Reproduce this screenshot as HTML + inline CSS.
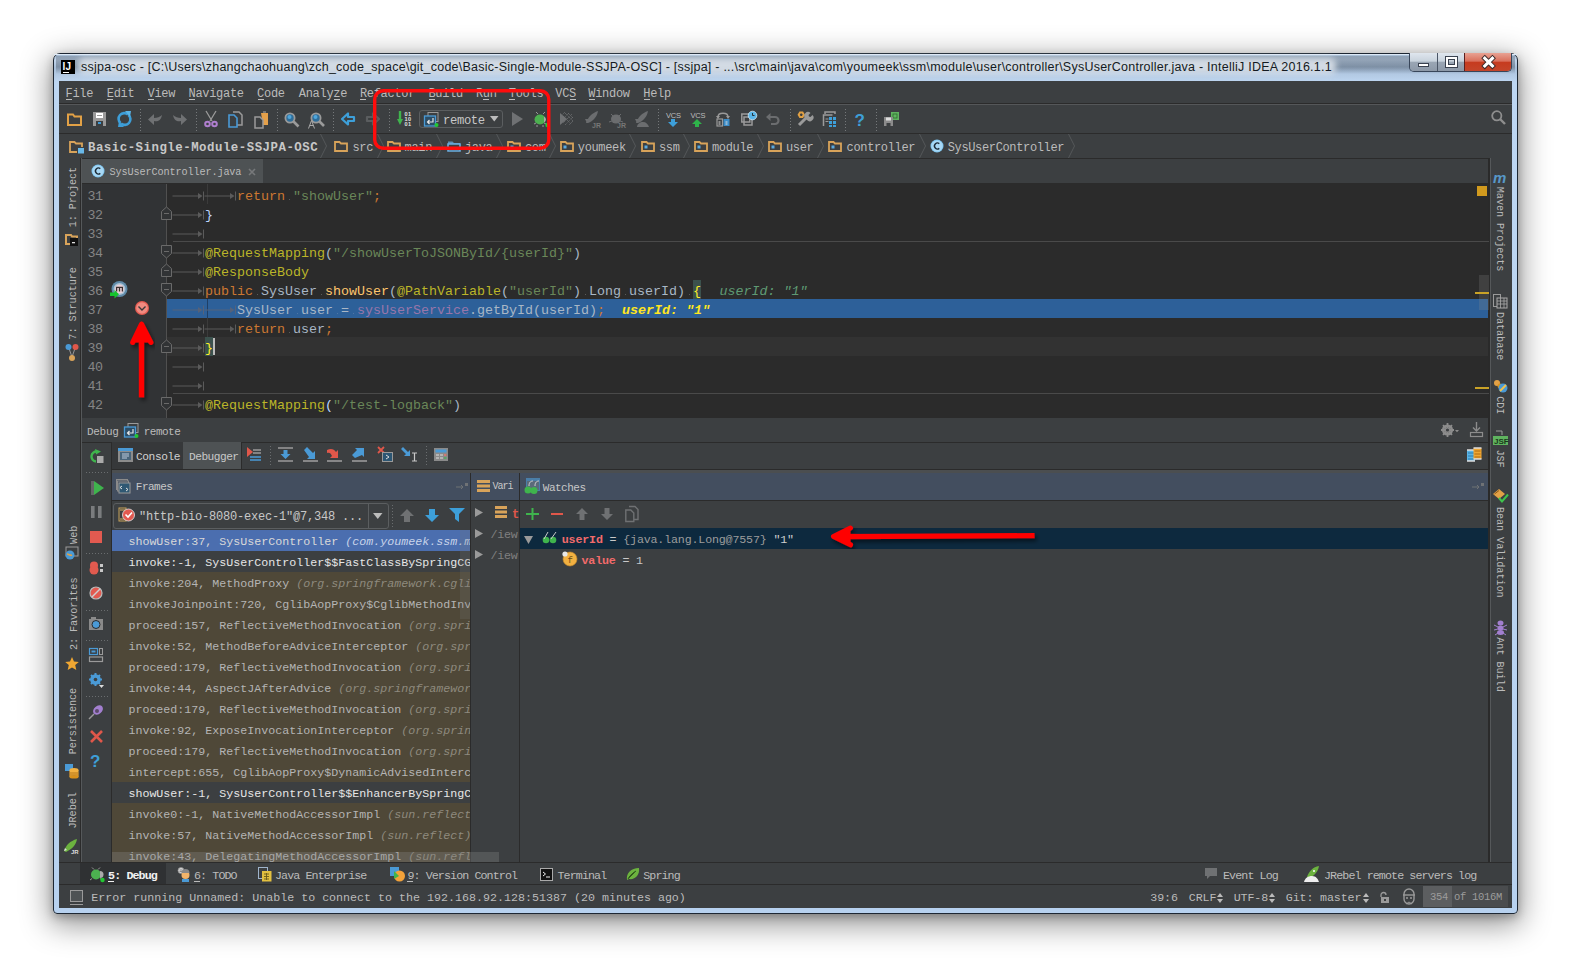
<!DOCTYPE html>
<html><head><meta charset="utf-8"><style>
*{margin:0;padding:0;box-sizing:border-box}
html,body{width:1571px;height:967px;overflow:hidden;background:#fff}
body{position:relative;font-family:"Liberation Mono",monospace;color:#bbb}
.a{position:absolute}
.t{position:absolute;white-space:pre}
svg.a{overflow:visible}
</style></head><body>
<div class="a" style="left:53px;top:53px;width:1465px;height:861px;border-radius:7px 7px 4px 4px;border:1px solid #1d2733;background:linear-gradient(180deg,#9fb6cf 0,#c3d6ec 6px,#a9c0da 14px,#b8cfe9 24px,#bdd6f2 28px,#b7d1ef 100%);box-shadow:0 8px 30px 3px rgba(0,0,0,.42),0 3px 8px rgba(0,0,0,.25)"></div>
<div class="a" style="left:54px;top:54px;width:1463px;height:1px;background:#dde9f6;"></div>
<div class="a" style="left:56px;top:56px;width:1459px;height:18px;background:linear-gradient(180deg,rgba(120,135,152,.55) 0,rgba(95,110,128,.6) 60%,rgba(120,140,165,.0) 100%)"></div>
<div class="a" style="left:78px;top:58px;width:1258px;height:16px;background:rgba(226,232,238,.85);filter:blur(3px);border-radius:6px"></div>
<div class="a" style="left:61px;top:60px;width:14px;height:14px;background:#000;"></div>
<div class="t" style="left:62.5px;top:62.03px;font-size:10px;line-height:10px;color:#fff;letter-spacing:0.2px;font-weight:bold;font-family:'Liberation Sans',sans-serif;">IJ</div>
<div class="a" style="left:63px;top:72px;width:6px;height:1px;background:#fff;"></div>
<div class="t" id="title" style="left:81px;top:61.42px;font-size:12.5px;line-height:12.5px;color:#141a22;font-family:'Liberation Sans',sans-serif;letter-spacing:0.24px">ssjpa-osc - [C:\Users\zhangchaohuang\zch_code_space\git_code\Basic-Single-Module-SSJPA-OSC] - [ssjpa] - ...\src\main\java\com\youmeek\ssm\module\user\controller\SysUserController.java - IntelliJ IDEA 2016.1.1</div>
<div class="a" style="left:1409px;top:53px;width:103px;height:19px;border:1px solid #38465a;border-top:none;border-radius:0 0 5px 5px;overflow:hidden"><div class="a" style="left:0;top:0;width:28px;height:18px;background:linear-gradient(180deg,#dfe6ee 0,#c9d3dd 45%,#9aa6b4 52%,#8d99a8 100%);border-right:1px solid #4a5566"></div><div class="a" style="left:28px;top:0;width:27px;height:18px;background:linear-gradient(180deg,#dfe6ee 0,#c9d3dd 45%,#9aa6b4 52%,#8d99a8 100%);border-right:1px solid #5a2020"></div><div class="a" style="left:55px;top:0;width:47px;height:18px;background:linear-gradient(180deg,#e8a293 0,#d9705c 45%,#c63b1f 52%,#c4452a 100%)"></div></div>
<div class="a" style="left:1418px;top:63px;width:11px;height:4px;background:#fff;border:1px solid #3a4250"></div>
<div class="a" style="left:1445.5px;top:57px;width:11px;height:9.5px;background:transparent;border:2.5px solid #fff;box-shadow:0 0 0 1px #3a4250, inset 0 0 0 1px #3a4250"></div>
<svg class="a" style="left:1482px;top:56px;" width="13" height="12" viewBox="0 0 13 12"><path d="M2.8 2.3l7.6 7.6M10.4 2.3l-7.6 7.6" stroke="#3a2a2a" stroke-width="5" stroke-linecap="square"/><path d="M2.8 2.3l7.6 7.6M10.4 2.3l-7.6 7.6" stroke="#ffffff" stroke-width="3.1" stroke-linecap="square"/></svg>
<div class="a" style="left:59px;top:81px;width:1453px;height:827px;background:#3c3f41;"></div>
<div class="a" style="left:59px;top:81px;width:1453px;height:22px;background:#3c3f41;"></div>
<div class="a" style="left:59px;top:103px;width:1453px;height:1px;background:#2b2b2b;"></div>
<div class="a" style="left:59px;top:104px;width:1453px;height:1px;background:#555759;"></div>
<div class="t" style="left:65.5px;top:87.81px;font-size:12px;line-height:12px;color:#bbbbbb;letter-spacing:-0.2999999999999998px;">File</div>
<div class="a" style="left:66.0px;top:99px;width:6px;height:1px;background:#bbbbbb;"></div>
<div class="t" style="left:106.8px;top:87.81px;font-size:12px;line-height:12px;color:#bbbbbb;letter-spacing:-0.2999999999999998px;">Edit</div>
<div class="a" style="left:107.3px;top:99px;width:6px;height:1px;background:#bbbbbb;"></div>
<div class="t" style="left:147.5px;top:87.81px;font-size:12px;line-height:12px;color:#bbbbbb;letter-spacing:-0.2999999999999998px;">View</div>
<div class="a" style="left:148.0px;top:99px;width:6px;height:1px;background:#bbbbbb;"></div>
<div class="t" style="left:188.5px;top:87.81px;font-size:12px;line-height:12px;color:#bbbbbb;letter-spacing:-0.2999999999999998px;">Navigate</div>
<div class="a" style="left:189.0px;top:99px;width:6px;height:1px;background:#bbbbbb;"></div>
<div class="t" style="left:257.1px;top:87.81px;font-size:12px;line-height:12px;color:#bbbbbb;letter-spacing:-0.2999999999999998px;">Code</div>
<div class="a" style="left:257.6px;top:99px;width:6px;height:1px;background:#bbbbbb;"></div>
<div class="t" style="left:298.8px;top:87.81px;font-size:12px;line-height:12px;color:#bbbbbb;letter-spacing:-0.2999999999999998px;">Analyze</div>
<div class="a" style="left:333.8px;top:99px;width:6px;height:1px;background:#bbbbbb;"></div>
<div class="t" style="left:359.9px;top:87.81px;font-size:12px;line-height:12px;color:#bbbbbb;letter-spacing:-0.2999999999999998px;">Refactor</div>
<div class="a" style="left:360.4px;top:99px;width:6px;height:1px;background:#bbbbbb;"></div>
<div class="t" style="left:428.4px;top:87.81px;font-size:12px;line-height:12px;color:#bbbbbb;letter-spacing:-0.2999999999999998px;">Build</div>
<div class="a" style="left:428.9px;top:99px;width:6px;height:1px;background:#bbbbbb;"></div>
<div class="t" style="left:475.9px;top:87.81px;font-size:12px;line-height:12px;color:#bbbbbb;letter-spacing:-0.2999999999999998px;">Run</div>
<div class="a" style="left:483.29999999999995px;top:99px;width:6px;height:1px;background:#bbbbbb;"></div>
<div class="t" style="left:508.8px;top:87.81px;font-size:12px;line-height:12px;color:#bbbbbb;letter-spacing:-0.2999999999999998px;">Tools</div>
<div class="a" style="left:509.3px;top:99px;width:6px;height:1px;background:#bbbbbb;"></div>
<div class="t" style="left:555.3px;top:87.81px;font-size:12px;line-height:12px;color:#bbbbbb;letter-spacing:-0.2999999999999998px;">VCS</div>
<div class="a" style="left:569.5999999999999px;top:99px;width:6px;height:1px;background:#bbbbbb;"></div>
<div class="t" style="left:588.3px;top:87.81px;font-size:12px;line-height:12px;color:#bbbbbb;letter-spacing:-0.2999999999999998px;">Window</div>
<div class="a" style="left:588.8px;top:99px;width:6px;height:1px;background:#bbbbbb;"></div>
<div class="t" style="left:643.3px;top:87.81px;font-size:12px;line-height:12px;color:#bbbbbb;letter-spacing:-0.2999999999999998px;">Help</div>
<div class="a" style="left:643.8px;top:99px;width:6px;height:1px;background:#bbbbbb;"></div>
<div class="a" style="left:59px;top:133px;width:1453px;height:1px;background:#2b2b2b;"></div>
<div class="a" style="left:140px;top:109px;width:1px;height:22px;background:repeating-linear-gradient(180deg,#75787a 0 1px,transparent 1px 3px)"></div>
<div class="a" style="left:196px;top:109px;width:1px;height:22px;background:repeating-linear-gradient(180deg,#75787a 0 1px,transparent 1px 3px)"></div>
<div class="a" style="left:277px;top:109px;width:1px;height:22px;background:repeating-linear-gradient(180deg,#75787a 0 1px,transparent 1px 3px)"></div>
<div class="a" style="left:333px;top:109px;width:1px;height:22px;background:repeating-linear-gradient(180deg,#75787a 0 1px,transparent 1px 3px)"></div>
<div class="a" style="left:389px;top:109px;width:1px;height:22px;background:repeating-linear-gradient(180deg,#75787a 0 1px,transparent 1px 3px)"></div>
<div class="a" style="left:658px;top:109px;width:1px;height:22px;background:repeating-linear-gradient(180deg,#75787a 0 1px,transparent 1px 3px)"></div>
<div class="a" style="left:790px;top:109px;width:1px;height:22px;background:repeating-linear-gradient(180deg,#75787a 0 1px,transparent 1px 3px)"></div>
<div class="a" style="left:845px;top:109px;width:1px;height:22px;background:repeating-linear-gradient(180deg,#75787a 0 1px,transparent 1px 3px)"></div>
<div class="a" style="left:876px;top:109px;width:1px;height:22px;background:repeating-linear-gradient(180deg,#75787a 0 1px,transparent 1px 3px)"></div>
<svg class="a" style="left:67px;top:112px;" width="15" height="14" viewBox="0 0 15 14"><path d="M1 2.5h5l1.5 2H14v8.5H1z" fill="none" stroke="#e2a146" stroke-width="2"/></svg>
<svg class="a" style="left:93px;top:112px;" width="13" height="14" viewBox="0 0 13 14"><path d="M0 0h13v14H0z" fill="#9a9a9a"/><rect x="3" y="1" width="7" height="5" fill="#fff"/><rect x="4" y="3" width="5" height="1" fill="#9a9a9a"/><rect x="3" y="9" width="7" height="5" fill="#3c3f41"/><rect x="5" y="10" width="3" height="2" fill="#3e9ad6"/></svg>
<svg class="a" style="left:117px;top:111px;" width="15" height="16" viewBox="0 0 15 16"><path d="M11 3.5A5.5 5.5 0 0 0 3.5 12" fill="none" stroke="#3d9ed8" stroke-width="2.6"/><path d="M4 12.5A5.5 5.5 0 0 0 11.5 4" fill="none" stroke="#3d9ed8" stroke-width="2.6"/><path d="M8 0l6 0-1 6z" fill="#5ab4e6"/><path d="M7 16l-6 0 1-6z" fill="#3d9ed8"/></svg>
<svg class="a" style="left:148px;top:112px;" width="15" height="14" viewBox="0 0 15 14"><path d="M14 3c-1 6-5 7-8 6v4L0 7.5 6 2v4c3 0 6-1 8-3z" fill="#6f7173"/></svg>
<svg class="a" style="left:172px;top:112px;" width="15" height="14" viewBox="0 0 15 14"><path d="M1 3c1 6 5 7 8 6v4l6-5.5L9 2v4C6 6 3 5 1 3z" fill="#6f7173"/></svg>
<svg class="a" style="left:204px;top:111px;" width="14" height="17" viewBox="0 0 14 17"><path d="M2 0l6 10M12 0L6 10" stroke="#9a9a9a" stroke-width="1.3"/><circle cx="3.5" cy="13" r="2.3" fill="none" stroke="#b07fcf" stroke-width="2"/><circle cx="10.5" cy="13" r="2.3" fill="none" stroke="#b07fcf" stroke-width="2"/></svg>
<svg class="a" style="left:228px;top:111px;" width="15" height="17" viewBox="0 0 15 17"><path d="M5 1h6l3 3v10H9" fill="none" stroke="#9a9a9a" stroke-width="1.5"/><path d="M1 4h5l3 3v9H1z" fill="none" stroke="#4a9ad6" stroke-width="1.6"/></svg>
<svg class="a" style="left:254px;top:111px;" width="15" height="17" viewBox="0 0 15 17"><path d="M7 2h7v12H9" fill="#e4a04a"/><path d="M9 1h3" stroke="#aaa"/><path d="M1 6h5l3 3v8H1z" fill="#3c3f41" stroke="#9a9a9a" stroke-width="1.5"/></svg>
<svg class="a" style="left:284px;top:112px;" width="16" height="16" viewBox="0 0 16 16"><circle cx="6" cy="6" r="4.6" fill="#2f6e9a" stroke="#9a9a9a" stroke-width="1.8"/><circle cx="5.5" cy="5" r="2" fill="#4ea6dc"/><path d="M9.5 9.5l5 5" stroke="#9a9a9a" stroke-width="2.6"/></svg>
<svg class="a" style="left:308px;top:112px;" width="17" height="17" viewBox="0 0 17 17"><circle cx="8" cy="6" r="4.6" fill="#2f6e9a" stroke="#9a9a9a" stroke-width="1.8"/><circle cx="7.5" cy="5" r="2" fill="#4ea6dc"/><path d="M11.5 9.5l4.5 4.5" stroke="#9a9a9a" stroke-width="2.6"/><path d="M0.5 16.5L3.5 8.5 6.5 16.5M1.8 13.5h3.4" fill="none" stroke="#aaa" stroke-width="1"/></svg>
<svg class="a" style="left:341px;top:112px;" width="14" height="14" viewBox="0 0 14 14"><path d="M1 7L7 1.5V5h6v4H7v3.5z" fill="none" stroke="#3d9fd9" stroke-width="2.2" stroke-linejoin="round"/></svg>
<svg class="a" style="left:366px;top:112px;" width="14" height="14" viewBox="0 0 14 14"><path d="M13 7L7 1.5V5H1v4h6v3.5z" fill="none" stroke="#5a5d5f" stroke-width="2.2" stroke-linejoin="round"/></svg>
<svg class="a" style="left:397px;top:111px;" width="16" height="16" viewBox="0 0 16 16"><path d="M3 0v10" stroke="#3fb44d" stroke-width="2.4"/><path d="M0 8l3 6 3-6z" fill="#3fb44d"/></svg>
<div class="t" style="left:404.5px;top:112.06px;font-size:5.6px;line-height:5.6px;color:#e0e0e0;letter-spacing:0.3px;font-weight:bold;font-family:'Liberation Sans',sans-serif;">01</div>
<div class="t" style="left:404.5px;top:116.86px;font-size:5.6px;line-height:5.6px;color:#e0e0e0;letter-spacing:0.3px;font-weight:bold;font-family:'Liberation Sans',sans-serif;">10</div>
<div class="t" style="left:404.5px;top:121.66px;font-size:5.6px;line-height:5.6px;color:#e0e0e0;letter-spacing:0.3px;font-weight:bold;font-family:'Liberation Sans',sans-serif;">01</div>
<div class="a" style="left:419px;top:110px;width:84px;height:18px;border:1px solid #5b5e60;border-radius:3px;"></div>
<svg class="a" style="left:424px;top:112px;" width="15" height="15" viewBox="0 0 15 15"><rect x="4" y="0.5" width="10" height="9" fill="none" stroke="#9a9a9a" stroke-width="1"/><rect x="0.5" y="4" width="11" height="10" fill="#2c4d66" stroke="#4a9ad6" stroke-width="1.3"/><path d="M9 6v4H3.5M5.5 8l-2 2 2 2" fill="none" stroke="#e6e6e6" stroke-width="1.2"/><circle cx="12.5" cy="13" r="2" fill="#22c832"/></svg>
<div class="t" style="left:443px;top:114.65px;font-size:12.2px;line-height:12.2px;color:#c8c8c8;letter-spacing:-0.35px;">remote</div>
<svg class="a" style="left:490px;top:116px;" width="9" height="6" viewBox="0 0 9 6"><path d="M0 0h8.5L4.25 5.5z" fill="#bcbcbc"/></svg>
<svg class="a" style="left:512px;top:112px;" width="12" height="14" viewBox="0 0 12 14"><path d="M0 0l11 7-11 7z" fill="#6f7173"/></svg>
<svg class="a" style="left:534px;top:111px;" width="16" height="17" viewBox="0 0 16 17"><ellipse cx="6" cy="8.5" rx="5.5" ry="5" fill="#4cb050"/><path d="M10 5.5a4 3.5 0 0 1 0 6z" fill="#aaa"/><path d="M2 1l2 2M11 1l-2 2M0 13l2-1M12 13l-2-1M3 14l0 2M9 14l0 2" stroke="#999" stroke-width="1"/><circle cx="13.5" cy="14" r="2.2" fill="#22c832"/></svg>
<svg class="a" style="left:560px;top:112px;" width="14" height="14" viewBox="0 0 14 14"><path d="M0 1l7 6-7 6z" fill="#6f7173"/><path d="M5 1l8 8M3 4l8 8M8 1l5 5M5 0l-4 4M9 1l-8 8M12 2l-9 9M13 5l-8 8M13 9l-4 4" stroke="#6f7173" stroke-width="1" stroke-dasharray="1 1"/></svg>
<svg class="a" style="left:584px;top:111px;" width="17" height="17" viewBox="0 0 17 17"><path d="M2 12c2-6 6-10 12-12-1 6-5 10-10 12z" fill="#6b6d6f"/><path d="M1 8l4 0-2 4z" fill="#6b6d6f"/><text x="8" y="17" font-size="7" font-family="Liberation Sans" font-weight="bold" fill="#777">JR</text></svg>
<svg class="a" style="left:609px;top:111px;" width="17" height="17" viewBox="0 0 17 17"><ellipse cx="7" cy="8" rx="5" ry="4.5" fill="#6b6d6f"/><path d="M2 3l2 2M12 3l-2 2M0 11l3-1M14 11l-3-1" stroke="#6b6d6f"/><text x="8" y="17" font-size="7" font-family="Liberation Sans" font-weight="bold" fill="#777">JR</text></svg>
<svg class="a" style="left:634px;top:111px;" width="17" height="17" viewBox="0 0 17 17"><path d="M2 12c2-6 6-10 12-12-1 6-5 10-10 12z" fill="#6b6d6f"/><path d="M1 8l4 0-2 4z" fill="#6b6d6f"/><path d="M3 16c0-3 3-5 6-5s5 2 6 5z" fill="#6b6d6f"/></svg>
<div class="t" style="left:666px;top:112.15px;font-size:7.5px;line-height:7.5px;color:#bdbdbd;letter-spacing:-0.2px;font-family:'Liberation Sans',sans-serif;">VCS</div>
<svg class="a" style="left:668px;top:119px;" width="10" height="8" viewBox="0 0 10 8"><path d="M3 0h4v3h3L5 8 0 3h3z" fill="#3d9fd9"/></svg>
<div class="t" style="left:690.5px;top:112.15px;font-size:7.5px;line-height:7.5px;color:#bdbdbd;letter-spacing:-0.2px;font-family:'Liberation Sans',sans-serif;">VCS</div>
<svg class="a" style="left:692px;top:119px;" width="10" height="8" viewBox="0 0 10 8"><path d="M3 8h4V5h3L5 0 0 5h3z" fill="#2eb34a"/></svg>
<svg class="a" style="left:716px;top:111px;" width="15" height="16" viewBox="0 0 15 16"><path d="M2 6c0-5 10-5 10 0" fill="none" stroke="#9a9a9a" stroke-width="1.4"/><path d="M0 5l2 3 2-3zM10 5l2 3 2-3z" fill="#9a9a9a"/><rect x="1" y="8" width="5.5" height="7" fill="none" stroke="#9a9a9a" stroke-width="1.2"/><rect x="7.5" y="8" width="6" height="7" fill="#3b8cc8"/><path d="M2.5 11h2M2.5 13h2M9.5 11h2M9.5 13h2" stroke="#ddd"/></svg>
<svg class="a" style="left:741px;top:111px;" width="16" height="15" viewBox="0 0 16 15"><rect x="0.8" y="3" width="8" height="8" fill="none" stroke="#9a9a9a" stroke-width="1.5"/><rect x="3" y="6" width="8" height="8" fill="none" stroke="#9a9a9a" stroke-width="1.5"/><circle cx="11.5" cy="4.5" r="4.3" fill="#5ab6ea" stroke="#cfe9f7" stroke-width=".8"/><path d="M11.5 2v2.5h2" stroke="#222" fill="none" stroke-width="0.9"/></svg>
<svg class="a" style="left:766px;top:112px;" width="14" height="14" viewBox="0 0 14 14"><path d="M4 5h5a3.5 3.5 0 0 1 0 7H5" fill="none" stroke="#6b6d6f" stroke-width="2.2"/><path d="M0 5l4.5-4v8z" fill="#6b6d6f"/></svg>
<svg class="a" style="left:797px;top:111px;" width="16" height="16" viewBox="0 0 16 16"><path d="M3 1.5l2.5 0 1.3 2.2-1.3 2.2H3L1.7 3.7z" fill="none" stroke="#e0a044" stroke-width="2"/><path d="M2 14l7-7" stroke="#9a9a9a" stroke-width="3"/><path d="M8.5 7.5a3.5 3.5 0 0 1 5-5.5l-2 2 .5 1.5 1.5.5 2-2a3.5 3.5 0 0 1-5.5 5z" fill="#9a9a9a"/></svg>
<svg class="a" style="left:822px;top:111px;" width="15" height="16" viewBox="0 0 15 16"><path d="M3 3V1h10v2M1.5 15V4h9" fill="none" stroke="#9a9a9a" stroke-width="1.5"/><path d="M3.5 8h3M3.5 10.5h3" stroke="#9a9a9a"/><rect x="7" y="6" width="3" height="3" fill="#3d9fd9"/><rect x="11" y="6" width="3" height="3" fill="#3d9fd9"/><rect x="7" y="10" width="3" height="3" fill="#3d9fd9"/><rect x="11" y="10" width="3" height="3" fill="#3d9fd9"/><rect x="7" y="14" width="3" height="2" fill="#3d9fd9"/><rect x="11" y="14" width="3" height="2" fill="#3d9fd9"/></svg>
<div class="t" style="left:854.5px;top:111.61px;font-size:17px;line-height:17px;color:#3e9fd8;font-weight:bold;font-family:'Liberation Sans',sans-serif;">?</div>
<svg class="a" style="left:884px;top:111px;" width="16" height="16" viewBox="0 0 16 16"><rect x="7" y="1" width="8" height="8" fill="#5fb35f"/><rect x="9" y="3" width="4" height="4" fill="none" stroke="#2d6b2d" stroke-width="0.8"/><path d="M0 6h9v9H0z" fill="#8c8c8c"/><rect x="2" y="6.5" width="5" height="3" fill="#ddd"/><rect x="2.5" y="12" width="4" height="3" fill="#3c3f41"/></svg>
<svg class="a" style="left:1491px;top:110px;" width="15" height="15" viewBox="0 0 15 15"><circle cx="5.8" cy="5.8" r="4.6" fill="none" stroke="#8e8e8e" stroke-width="1.8"/><path d="M9 9l5 5" stroke="#8e8e8e" stroke-width="2.4"/></svg>
<div class="a" style="left:59px;top:158px;width:1453px;height:1px;background:#2b2b2b;"></div>
<svg class="a" style="left:69px;top:140px;" width="16" height="14" viewBox="0 0 16 14"><path d="M1 2h4.5l1.5 1.5H13V12H1z" fill="none" stroke="#d8a35a" stroke-width="1.8"/><rect x="8.5" y="7.5" width="7" height="6.5" fill="#69b8e8" stroke="#3c3f41" stroke-width="1"/></svg>
<div class="t" style="left:88px;top:141.50px;font-size:12.4px;line-height:12.4px;color:#c8c8c8;letter-spacing:0.5px;font-weight:bold;">Basic-Single-Module-SSJPA-OSC</div>
<svg class="a" style="left:320px;top:134px;" width="8" height="24" viewBox="0 0 8 24"><path d="M0.5 0L6.5 12 0.5 24" fill="none" stroke="#545759" stroke-width="1"/></svg>
<svg class="a" style="left:334px;top:140px;" width="14" height="12" viewBox="0 0 14 12"><path d="M1 2h4.5l1.5 1.5H13V11H1z" fill="none" stroke="#d8a35a" stroke-width="1.8"/></svg>
<div class="t" style="left:352.5px;top:142.11px;font-size:12px;line-height:12px;color:#bbbbbb;letter-spacing:-0.35000000000000053px;">src</div>
<svg class="a" style="left:377px;top:134px;" width="8" height="24" viewBox="0 0 8 24"><path d="M0.5 0L6.5 12 0.5 24" fill="none" stroke="#545759" stroke-width="1"/></svg>
<svg class="a" style="left:387px;top:140px;" width="14" height="12" viewBox="0 0 14 12"><path d="M1 2h4.5l1.5 1.5H13V11H1z" fill="none" stroke="#d8a35a" stroke-width="1.8"/></svg>
<div class="t" style="left:404.6px;top:142.11px;font-size:12px;line-height:12px;color:#bbbbbb;letter-spacing:-0.35000000000000053px;">main</div>
<svg class="a" style="left:436px;top:134px;" width="8" height="24" viewBox="0 0 8 24"><path d="M0.5 0L6.5 12 0.5 24" fill="none" stroke="#545759" stroke-width="1"/></svg>
<svg class="a" style="left:447px;top:140px;" width="14" height="12" viewBox="0 0 14 12"><path d="M1 1.5h4.5l1.5 1.5H13V11H1z" fill="#5a8fb5"/><path d="M1 4h12v7H1z" fill="#3c3f41" stroke="#6aaee0" stroke-width="1.6"/></svg>
<div class="t" style="left:465px;top:142.11px;font-size:12px;line-height:12px;color:#bbbbbb;letter-spacing:-0.35000000000000053px;">java</div>
<svg class="a" style="left:496px;top:134px;" width="8" height="24" viewBox="0 0 8 24"><path d="M0.5 0L6.5 12 0.5 24" fill="none" stroke="#545759" stroke-width="1"/></svg>
<svg class="a" style="left:507px;top:140px;" width="14" height="12" viewBox="0 0 14 12"><path d="M1 2h4.5l1.5 1.5H13V11H1z" fill="none" stroke="#d8a35a" stroke-width="1.8"/><rect x="3.5" y="5.5" width="3" height="3" fill="#5aa9e0"/></svg>
<div class="t" style="left:525px;top:142.11px;font-size:12px;line-height:12px;color:#bbbbbb;letter-spacing:-0.35000000000000053px;">com</div>
<svg class="a" style="left:549px;top:134px;" width="8" height="24" viewBox="0 0 8 24"><path d="M0.5 0L6.5 12 0.5 24" fill="none" stroke="#545759" stroke-width="1"/></svg>
<svg class="a" style="left:560px;top:140px;" width="14" height="12" viewBox="0 0 14 12"><path d="M1 2h4.5l1.5 1.5H13V11H1z" fill="none" stroke="#d8a35a" stroke-width="1.8"/><rect x="3.5" y="5.5" width="3" height="3" fill="#5aa9e0"/></svg>
<div class="t" style="left:577.8px;top:142.11px;font-size:12px;line-height:12px;color:#bbbbbb;letter-spacing:-0.35000000000000053px;">youmeek</div>
<svg class="a" style="left:629px;top:134px;" width="8" height="24" viewBox="0 0 8 24"><path d="M0.5 0L6.5 12 0.5 24" fill="none" stroke="#545759" stroke-width="1"/></svg>
<svg class="a" style="left:641px;top:140px;" width="14" height="12" viewBox="0 0 14 12"><path d="M1 2h4.5l1.5 1.5H13V11H1z" fill="none" stroke="#d8a35a" stroke-width="1.8"/><rect x="3.5" y="5.5" width="3" height="3" fill="#5aa9e0"/></svg>
<div class="t" style="left:659px;top:142.11px;font-size:12px;line-height:12px;color:#bbbbbb;letter-spacing:-0.35000000000000053px;">ssm</div>
<svg class="a" style="left:683px;top:134px;" width="8" height="24" viewBox="0 0 8 24"><path d="M0.5 0L6.5 12 0.5 24" fill="none" stroke="#545759" stroke-width="1"/></svg>
<svg class="a" style="left:694px;top:140px;" width="14" height="12" viewBox="0 0 14 12"><path d="M1 2h4.5l1.5 1.5H13V11H1z" fill="none" stroke="#d8a35a" stroke-width="1.8"/><rect x="3.5" y="5.5" width="3" height="3" fill="#5aa9e0"/></svg>
<div class="t" style="left:712px;top:142.11px;font-size:12px;line-height:12px;color:#bbbbbb;letter-spacing:-0.35000000000000053px;">module</div>
<svg class="a" style="left:757px;top:134px;" width="8" height="24" viewBox="0 0 8 24"><path d="M0.5 0L6.5 12 0.5 24" fill="none" stroke="#545759" stroke-width="1"/></svg>
<svg class="a" style="left:768px;top:140px;" width="14" height="12" viewBox="0 0 14 12"><path d="M1 2h4.5l1.5 1.5H13V11H1z" fill="none" stroke="#d8a35a" stroke-width="1.8"/><rect x="3.5" y="5.5" width="3" height="3" fill="#5aa9e0"/></svg>
<div class="t" style="left:786px;top:142.11px;font-size:12px;line-height:12px;color:#bbbbbb;letter-spacing:-0.35000000000000053px;">user</div>
<svg class="a" style="left:817px;top:134px;" width="8" height="24" viewBox="0 0 8 24"><path d="M0.5 0L6.5 12 0.5 24" fill="none" stroke="#545759" stroke-width="1"/></svg>
<svg class="a" style="left:828px;top:140px;" width="14" height="12" viewBox="0 0 14 12"><path d="M1 2h4.5l1.5 1.5H13V11H1z" fill="none" stroke="#d8a35a" stroke-width="1.8"/><rect x="3.5" y="5.5" width="3" height="3" fill="#5aa9e0"/></svg>
<div class="t" style="left:846.6px;top:142.11px;font-size:12px;line-height:12px;color:#bbbbbb;letter-spacing:-0.35000000000000053px;">controller</div>
<svg class="a" style="left:919px;top:134px;" width="8" height="24" viewBox="0 0 8 24"><path d="M0.5 0L6.5 12 0.5 24" fill="none" stroke="#545759" stroke-width="1"/></svg>
<svg class="a" style="left:930px;top:139px;" width="14" height="14" viewBox="0 0 14 14"><circle cx="7" cy="7" r="6.5" fill="#7fc6f0"/><circle cx="7" cy="7" r="5.6" fill="#a8d8f5"/><path d="M9.3 4.6A3 3 0 1 0 9.3 9.4" fill="none" stroke="#1b2a36" stroke-width="1.4"/></svg>
<div class="t" style="left:947.7px;top:142.11px;font-size:12px;line-height:12px;color:#bbbbbb;letter-spacing:-0.35000000000000053px;">SysUserController</div>
<svg class="a" style="left:1068px;top:134px;" width="8" height="24" viewBox="0 0 8 24"><path d="M0.5 0L6.5 12 0.5 24" fill="none" stroke="#545759" stroke-width="1"/></svg>
<div class="a" style="left:59px;top:158px;width:22px;height:704px;background:#3c3f41;"></div>
<div class="a" style="left:80px;top:158px;width:1px;height:704px;background:#2b2b2b;"></div>
<div class="a" style="left:81px;top:158px;width:1px;height:704px;background:#55585a;"></div>
<div class="a" style="left:1490px;top:158px;width:22px;height:704px;background:#3c3f41;"></div>
<div class="a" style="left:1488px;top:158px;width:2px;height:704px;background:#2a2a2a;"></div>
<div class="a" style="left:1490px;top:158px;width:1px;height:704px;background:#55585a;"></div>
<div class="a" style="left:82px;top:159px;width:1406px;height:24px;background:#3c3f41;"></div>
<div class="a" style="left:82px;top:159px;width:181px;height:24px;background:#4e5254;"></div>
<svg class="a" style="left:91px;top:164px;" width="14" height="14" viewBox="0 0 14 14"><circle cx="7" cy="7" r="6.5" fill="#7fc6f0"/><circle cx="7" cy="7" r="5.6" fill="#a8d8f5"/><path d="M9.3 4.6A3 3 0 1 0 9.3 9.4" fill="none" stroke="#1b2a36" stroke-width="1.4"/></svg>
<div class="t" style="left:109.5px;top:168.19px;font-size:10.2px;line-height:10.2px;color:#bbbbbb;letter-spacing:-0.1200000000000001px;">SysUserController.java</div>
<svg class="a" style="left:248px;top:168px;" width="8" height="8" viewBox="0 0 8 8"><path d="M1 1l6 6M7 1L1 7" stroke="#77797b" stroke-width="1.6"/></svg>
<div class="a" style="left:82px;top:183px;width:1406px;height:1px;background:#2b2b2b;"></div>
<div class="a" style="left:82px;top:184px;width:1406px;height:234px;background:#2b2b2b;"></div>
<div class="a" style="left:82px;top:184px;width:84px;height:234px;background:#313335;"></div>
<div class="a" style="left:167px;top:299px;width:1321px;height:19px;background:#2d6099;"></div>
<div class="a" style="left:167px;top:337px;width:1321px;height:19px;background:#323232;"></div>
<div class="a" style="left:173px;top:241px;width:1316px;height:1px;background:#4a4a4a;"></div>
<div class="a" style="left:173px;top:393px;width:1316px;height:1px;background:#4a4a4a;"></div>
<div class="a" style="left:166px;top:184px;width:1px;height:235px;background:#505050;"></div>
<div class="a" style="left:207px;top:184px;width:1px;height:20px;background:#3b3b3b;"></div>
<div class="a" style="left:207px;top:299px;width:1px;height:19px;background:#1f3f66;"></div>
<div class="a" style="left:207px;top:318px;width:1px;height:19px;background:#3b3b3b;"></div>
<svg class="a" style="left:172.0px;top:190.5px;" width="33" height="10" viewBox="0 0 33 10"><path d="M0.5 5H28" stroke="#5b5b5b" stroke-width="1"/><path d="M26 2l4.5 3-4.5 3z" fill="#5b5b5b"/><path d="M31.5 0.5v9" stroke="#5b5b5b" stroke-width="1"/></svg>
<svg class="a" style="left:172.0px;top:209.5px;" width="33" height="10" viewBox="0 0 33 10"><path d="M0.5 5H28" stroke="#5b5b5b" stroke-width="1"/><path d="M26 2l4.5 3-4.5 3z" fill="#5b5b5b"/><path d="M31.5 0.5v9" stroke="#5b5b5b" stroke-width="1"/></svg>
<svg class="a" style="left:172.0px;top:228.5px;" width="33" height="10" viewBox="0 0 33 10"><path d="M0.5 5H28" stroke="#5b5b5b" stroke-width="1"/><path d="M26 2l4.5 3-4.5 3z" fill="#5b5b5b"/><path d="M31.5 0.5v9" stroke="#5b5b5b" stroke-width="1"/></svg>
<svg class="a" style="left:172.0px;top:247.5px;" width="33" height="10" viewBox="0 0 33 10"><path d="M0.5 5H28" stroke="#5b5b5b" stroke-width="1"/><path d="M26 2l4.5 3-4.5 3z" fill="#5b5b5b"/><path d="M31.5 0.5v9" stroke="#5b5b5b" stroke-width="1"/></svg>
<svg class="a" style="left:172.0px;top:266.5px;" width="33" height="10" viewBox="0 0 33 10"><path d="M0.5 5H28" stroke="#5b5b5b" stroke-width="1"/><path d="M26 2l4.5 3-4.5 3z" fill="#5b5b5b"/><path d="M31.5 0.5v9" stroke="#5b5b5b" stroke-width="1"/></svg>
<svg class="a" style="left:172.0px;top:285.5px;" width="33" height="10" viewBox="0 0 33 10"><path d="M0.5 5H28" stroke="#5b5b5b" stroke-width="1"/><path d="M26 2l4.5 3-4.5 3z" fill="#5b5b5b"/><path d="M31.5 0.5v9" stroke="#5b5b5b" stroke-width="1"/></svg>
<svg class="a" style="left:172.0px;top:304.5px;" width="33" height="10" viewBox="0 0 33 10"><path d="M0.5 5H28" stroke="#55627a" stroke-width="1"/><path d="M26 2l4.5 3-4.5 3z" fill="#55627a"/><path d="M31.5 0.5v9" stroke="#55627a" stroke-width="1"/></svg>
<svg class="a" style="left:172.0px;top:323.5px;" width="33" height="10" viewBox="0 0 33 10"><path d="M0.5 5H28" stroke="#5b5b5b" stroke-width="1"/><path d="M26 2l4.5 3-4.5 3z" fill="#5b5b5b"/><path d="M31.5 0.5v9" stroke="#5b5b5b" stroke-width="1"/></svg>
<svg class="a" style="left:172.0px;top:342.5px;" width="33" height="10" viewBox="0 0 33 10"><path d="M0.5 5H28" stroke="#5b5b5b" stroke-width="1"/><path d="M26 2l4.5 3-4.5 3z" fill="#5b5b5b"/><path d="M31.5 0.5v9" stroke="#5b5b5b" stroke-width="1"/></svg>
<svg class="a" style="left:172.0px;top:361.5px;" width="33" height="10" viewBox="0 0 33 10"><path d="M0.5 5H28" stroke="#5b5b5b" stroke-width="1"/><path d="M26 2l4.5 3-4.5 3z" fill="#5b5b5b"/><path d="M31.5 0.5v9" stroke="#5b5b5b" stroke-width="1"/></svg>
<svg class="a" style="left:172.0px;top:380.5px;" width="33" height="10" viewBox="0 0 33 10"><path d="M0.5 5H28" stroke="#5b5b5b" stroke-width="1"/><path d="M26 2l4.5 3-4.5 3z" fill="#5b5b5b"/><path d="M31.5 0.5v9" stroke="#5b5b5b" stroke-width="1"/></svg>
<svg class="a" style="left:172.0px;top:399.5px;" width="33" height="10" viewBox="0 0 33 10"><path d="M0.5 5H28" stroke="#5b5b5b" stroke-width="1"/><path d="M26 2l4.5 3-4.5 3z" fill="#5b5b5b"/><path d="M31.5 0.5v9" stroke="#5b5b5b" stroke-width="1"/></svg>
<svg class="a" style="left:204.0px;top:190.5px;" width="33" height="10" viewBox="0 0 33 10"><path d="M0.5 5H28" stroke="#5b5b5b" stroke-width="1"/><path d="M26 2l4.5 3-4.5 3z" fill="#5b5b5b"/><path d="M31.5 0.5v9" stroke="#5b5b5b" stroke-width="1"/></svg>
<svg class="a" style="left:204.0px;top:304.5px;" width="33" height="10" viewBox="0 0 33 10"><path d="M0.5 5H28" stroke="#55627a" stroke-width="1"/><path d="M26 2l4.5 3-4.5 3z" fill="#55627a"/><path d="M31.5 0.5v9" stroke="#55627a" stroke-width="1"/></svg>
<svg class="a" style="left:204.0px;top:323.5px;" width="33" height="10" viewBox="0 0 33 10"><path d="M0.5 5H28" stroke="#5b5b5b" stroke-width="1"/><path d="M26 2l4.5 3-4.5 3z" fill="#5b5b5b"/><path d="M31.5 0.5v9" stroke="#5b5b5b" stroke-width="1"/></svg>
<div class="t" style="left:237.0px;top:189.79px;font-size:13.33px;line-height:13.33px;color:#cc7832;">return</div>
<div class="t" style="left:293.0px;top:189.79px;font-size:13.33px;line-height:13.33px;color:#6a8759;">&quot;showUser&quot;</div>
<div class="t" style="left:373.0px;top:189.79px;font-size:13.33px;line-height:13.33px;color:#cc7832;">;</div>
<div class="t" style="left:205.0px;top:208.79px;font-size:13.33px;line-height:13.33px;color:#bed6ff;">}</div>
<div class="t" style="left:205.0px;top:246.79px;font-size:13.33px;line-height:13.33px;color:#bbb529;">@RequestMapping</div>
<div class="t" style="left:325.0px;top:246.79px;font-size:13.33px;line-height:13.33px;color:#a9b7c6;">(</div>
<div class="t" style="left:333.0px;top:246.79px;font-size:13.33px;line-height:13.33px;color:#6a8759;">&quot;/showUserToJSONById/{userId}&quot;</div>
<div class="t" style="left:573.0px;top:246.79px;font-size:13.33px;line-height:13.33px;color:#a9b7c6;">)</div>
<div class="t" style="left:205.0px;top:265.79px;font-size:13.33px;line-height:13.33px;color:#bbb529;">@ResponseBody</div>
<div class="t" style="left:205.0px;top:284.79px;font-size:13.33px;line-height:13.33px;color:#cc7832;">public</div>
<div class="t" style="left:261.0px;top:284.79px;font-size:13.33px;line-height:13.33px;color:#a9b7c6;">SysUser</div>
<div class="t" style="left:325.0px;top:284.79px;font-size:13.33px;line-height:13.33px;color:#ffc66d;">showUser</div>
<div class="t" style="left:389.0px;top:284.79px;font-size:13.33px;line-height:13.33px;color:#a9b7c6;">(</div>
<div class="t" style="left:397.0px;top:284.79px;font-size:13.33px;line-height:13.33px;color:#bbb529;">@PathVariable</div>
<div class="t" style="left:501.0px;top:284.79px;font-size:13.33px;line-height:13.33px;color:#a9b7c6;">(</div>
<div class="t" style="left:509.0px;top:284.79px;font-size:13.33px;line-height:13.33px;color:#6a8759;">&quot;userId&quot;</div>
<div class="t" style="left:573.0px;top:284.79px;font-size:13.33px;line-height:13.33px;color:#a9b7c6;">) Long userId) </div>
<div class="a" style="left:693.0px;top:280px;width:8px;height:19px;background:#3b514d;"></div>
<div class="t" style="left:693.0px;top:284.79px;font-size:13.33px;line-height:13.33px;color:#ffef28;">{</div>
<div class="t" style="left:719.5px;top:284.79px;font-size:13.33px;line-height:13.33px;color:#5f9a73;font-style:italic;">userId: &quot;1&quot;</div>
<div class="t" style="left:237.0px;top:303.79px;font-size:13.33px;line-height:13.33px;color:#a9b7c6;">SysUser user = </div>
<div class="t" style="left:357.0px;top:303.79px;font-size:13.33px;line-height:13.33px;color:#9876aa;">sysUserService</div>
<div class="t" style="left:469.0px;top:303.79px;font-size:13.33px;line-height:13.33px;color:#a9b7c6;">.getById(userId)</div>
<div class="t" style="left:597.0px;top:303.79px;font-size:13.33px;line-height:13.33px;color:#cc7832;">;</div>
<div class="t" style="left:622px;top:303.79px;font-size:13.33px;line-height:13.33px;color:#ffe620;font-weight:bold;font-style:italic;">userId: &quot;1&quot;</div>
<div class="t" style="left:237.0px;top:322.79px;font-size:13.33px;line-height:13.33px;color:#cc7832;">return</div>
<div class="t" style="left:293.0px;top:322.79px;font-size:13.33px;line-height:13.33px;color:#a9b7c6;">user</div>
<div class="t" style="left:325.0px;top:322.79px;font-size:13.33px;line-height:13.33px;color:#cc7832;">;</div>
<div class="a" style="left:205.0px;top:337px;width:8px;height:19px;background:#3b514d;"></div>
<div class="t" style="left:205.0px;top:341.79px;font-size:13.33px;line-height:13.33px;color:#ffef28;">}</div>
<div class="a" style="left:213px;top:338px;width:2px;height:17px;background:#bbbbbb;"></div>
<div class="t" style="left:205.0px;top:398.79px;font-size:13.33px;line-height:13.33px;color:#bbb529;">@RequestMapping</div>
<div class="t" style="left:325.0px;top:398.79px;font-size:13.33px;line-height:13.33px;color:#bed6ff;">(</div>
<div class="t" style="left:333.0px;top:398.79px;font-size:13.33px;line-height:13.33px;color:#6a8759;">&quot;/test-logback&quot;</div>
<div class="t" style="left:453.0px;top:398.79px;font-size:13.33px;line-height:13.33px;color:#a9b7c6;">)</div>
<div class="a" style="left:288.5px;top:199px;width:1px;height:1px;background:#5a5a5a;"></div>
<div class="a" style="left:256.5px;top:294px;width:1px;height:1px;background:#5a5a5a;"></div>
<div class="a" style="left:320.5px;top:294px;width:1px;height:1px;background:#5a5a5a;"></div>
<div class="a" style="left:584.5px;top:294px;width:1px;height:1px;background:#5a5a5a;"></div>
<div class="a" style="left:624.5px;top:294px;width:1px;height:1px;background:#5a5a5a;"></div>
<div class="a" style="left:688.5px;top:294px;width:1px;height:1px;background:#5a5a5a;"></div>
<div class="a" style="left:296.5px;top:313px;width:1px;height:1px;background:#4f75a5;"></div>
<div class="a" style="left:336.5px;top:313px;width:1px;height:1px;background:#4f75a5;"></div>
<div class="a" style="left:352.5px;top:313px;width:1px;height:1px;background:#4f75a5;"></div>
<div class="a" style="left:288.5px;top:332px;width:1px;height:1px;background:#5a5a5a;"></div>
<div class="t" style="left:87.5px;top:189.79px;font-size:13.33px;line-height:13.33px;color:#858585;letter-spacing:-0.5999999999999996px;">31</div>
<div class="t" style="left:87.5px;top:208.79px;font-size:13.33px;line-height:13.33px;color:#858585;letter-spacing:-0.5999999999999996px;">32</div>
<div class="t" style="left:87.5px;top:227.79px;font-size:13.33px;line-height:13.33px;color:#858585;letter-spacing:-0.5999999999999996px;">33</div>
<div class="t" style="left:87.5px;top:246.79px;font-size:13.33px;line-height:13.33px;color:#858585;letter-spacing:-0.5999999999999996px;">34</div>
<div class="t" style="left:87.5px;top:265.79px;font-size:13.33px;line-height:13.33px;color:#858585;letter-spacing:-0.5999999999999996px;">35</div>
<div class="t" style="left:87.5px;top:284.79px;font-size:13.33px;line-height:13.33px;color:#858585;letter-spacing:-0.5999999999999996px;">36</div>
<div class="t" style="left:87.5px;top:303.79px;font-size:13.33px;line-height:13.33px;color:#858585;letter-spacing:-0.5999999999999996px;">37</div>
<div class="t" style="left:87.5px;top:322.79px;font-size:13.33px;line-height:13.33px;color:#858585;letter-spacing:-0.5999999999999996px;">38</div>
<div class="t" style="left:87.5px;top:341.79px;font-size:13.33px;line-height:13.33px;color:#858585;letter-spacing:-0.5999999999999996px;">39</div>
<div class="t" style="left:87.5px;top:360.79px;font-size:13.33px;line-height:13.33px;color:#858585;letter-spacing:-0.5999999999999996px;">40</div>
<div class="t" style="left:87.5px;top:379.79px;font-size:13.33px;line-height:13.33px;color:#858585;letter-spacing:-0.5999999999999996px;">41</div>
<div class="t" style="left:87.5px;top:398.79px;font-size:13.33px;line-height:13.33px;color:#858585;letter-spacing:-0.5999999999999996px;">42</div>
<svg class="a" style="left:161px;top:207px;" width="11" height="13" viewBox="0 0 11 13"><path d="M0.5 12.5h10v-8l-5-4.5-5 4.5z" fill="#313335" stroke="#6a6a6a" stroke-width="1"/><path d="M3 6.5h5" stroke="#6a6a6a"/></svg>
<svg class="a" style="left:161px;top:245px;" width="11" height="13" viewBox="0 0 11 13"><path d="M0.5 0.5h10v8l-5 4.5-5-4.5z" fill="#313335" stroke="#6a6a6a" stroke-width="1"/><path d="M3 6.5h5" stroke="#6a6a6a"/></svg>
<svg class="a" style="left:161px;top:264px;" width="11" height="13" viewBox="0 0 11 13"><path d="M0.5 12.5h10v-8l-5-4.5-5 4.5z" fill="#313335" stroke="#6a6a6a" stroke-width="1"/><path d="M3 6.5h5" stroke="#6a6a6a"/></svg>
<svg class="a" style="left:161px;top:283px;" width="11" height="13" viewBox="0 0 11 13"><path d="M0.5 0.5h10v8l-5 4.5-5-4.5z" fill="#313335" stroke="#6a6a6a" stroke-width="1"/><path d="M3 6.5h5" stroke="#6a6a6a"/></svg>
<svg class="a" style="left:161px;top:340px;" width="11" height="13" viewBox="0 0 11 13"><path d="M0.5 12.5h10v-8l-5-4.5-5 4.5z" fill="#313335" stroke="#6a6a6a" stroke-width="1"/><path d="M3 6.5h5" stroke="#6a6a6a"/></svg>
<svg class="a" style="left:161px;top:397px;" width="11" height="13" viewBox="0 0 11 13"><path d="M0.5 0.5h10v8l-5 4.5-5-4.5z" fill="#313335" stroke="#6a6a6a" stroke-width="1"/><path d="M3 6.5h5" stroke="#6a6a6a"/></svg>
<svg class="a" style="left:109px;top:280px;" width="20" height="20" viewBox="0 0 20 20"><circle cx="10.5" cy="9" r="8" fill="#5f8aa8"/><circle cx="10.5" cy="9" r="6" fill="#a9c2d4"/><circle cx="10.5" cy="9" r="4.6" fill="#ead0d6"/><path d="M7.6 11.5V7.3h5.8v4.2M10.5 7.3v4.2" fill="none" stroke="#3a3030" stroke-width="1.3"/><path d="M1 12.5h4.5V10l4.5 4.3-4.5 4.3V16H1z" fill="#15c42d"/></svg>
<svg class="a" style="left:134px;top:300px;" width="16" height="16" viewBox="0 0 16 16"><circle cx="8" cy="8" r="7" fill="#e25a50"/><circle cx="8" cy="8" r="5.8" fill="#f08a80"/><path d="M4.5 6.5l3.5 3.5 3.5-3.5" fill="none" stroke="#3a3a3a" stroke-width="1.4"/></svg>
<div class="a" style="left:1479px;top:275px;width:10px;height:35px;background:rgba(140,140,140,.22);"></div>
<div class="a" style="left:1477px;top:186px;width:10px;height:10px;background:#d19a1e;"></div>
<div class="a" style="left:1475px;top:292px;width:14px;height:2px;background:#c9a227;"></div>
<div class="a" style="left:1475px;top:387px;width:14px;height:2px;background:#c9a227;"></div>
<div class="a" style="left:82px;top:418px;width:1406px;height:24px;background:#3c3f41;"></div>
<div class="t" style="left:87px;top:427.07px;font-size:11px;line-height:11px;color:#bbbbbb;letter-spacing:-0.2999999999999998px;">Debug</div>
<svg class="a" style="left:124px;top:423px;" width="15" height="15" viewBox="0 0 15 15"><rect x="4" y="0.5" width="10" height="9" fill="none" stroke="#9a9a9a" stroke-width="1"/><rect x="0.5" y="4" width="11" height="10" fill="#2c4d66" stroke="#4a9ad6" stroke-width="1.3"/><path d="M9 6v4H3.5M5.5 8l-2 2 2 2" fill="none" stroke="#e6e6e6" stroke-width="1.2"/><circle cx="12.5" cy="13" r="2" fill="#22c832"/></svg>
<div class="t" style="left:143.7px;top:427.07px;font-size:11px;line-height:11px;color:#bbbbbb;letter-spacing:-0.5px;">remote</div>
<svg class="a" style="left:1441px;top:423px;" width="18" height="14" viewBox="0 0 18 14"><circle cx="6.5" cy="7" r="4.3" fill="none" stroke="#8c8c8c" stroke-width="2.6"/><path d="M6.5 0v14M0 7h13M2 2.2l9 9.6M11 2.2l-9 9.6" stroke="#8c8c8c" stroke-width="1.8"/><circle cx="6.5" cy="7" r="1.6" fill="#3c3f41"/><path d="M14 7h4l-2 2.2z" fill="#8c8c8c"/></svg>
<svg class="a" style="left:1470px;top:422px;" width="13" height="15" viewBox="0 0 13 15"><path d="M6.5 0v8" stroke="#8c8c8c" stroke-width="1.4"/><path d="M3 5.5l3.5 3.5 3.5-3.5" fill="none" stroke="#8c8c8c" stroke-width="1.4"/><rect x="0.5" y="10.5" width="12" height="4" fill="none" stroke="#8c8c8c" stroke-width="1.2"/></svg>
<div class="a" style="left:82px;top:442px;width:1406px;height:1px;background:#2b2b2b;"></div>
<div class="a" style="left:111px;top:442px;width:1px;height:420px;background:#2b2b2b;"></div>
<div class="a" style="left:112px;top:442px;width:71px;height:28px;background:#36383a;"></div>
<div class="a" style="left:183px;top:442px;width:58px;height:28px;background:#4e5254;"></div>
<div class="a" style="left:241px;top:442px;width:1px;height:28px;background:#2b2b2b;"></div>
<div class="a" style="left:112px;top:469px;width:1376px;height:1px;background:#2b2b2b;"></div>
<div class="a" style="left:112px;top:470px;width:1376px;height:3px;background:#4b4e50;"></div>
<svg class="a" style="left:118px;top:448px;" width="15" height="14" viewBox="0 0 15 14"><rect x="0" y="0" width="15" height="14" fill="#8c8c8c"/><rect x="0" y="0" width="15" height="3" fill="#4a9ad6"/><rect x="2" y="4" width="11" height="8" fill="#4a657a"/><path d="M4 6h7M4 8h7M4 10h5" stroke="#bcd" stroke-width="1"/></svg>
<div class="t" style="left:136px;top:451.92px;font-size:11.2px;line-height:11.2px;color:#d0d0d0;letter-spacing:-0.41999999999999993px;">Console</div>
<div class="t" style="left:189px;top:451.92px;font-size:11.2px;line-height:11.2px;color:#c8c8c8;letter-spacing:-0.5199999999999996px;">Debugger</div>
<svg class="a" style="left:89px;top:449px;" width="15" height="14" viewBox="0 0 15 14"><path d="M8 2.5A5 5 0 1 0 7 12.5" fill="none" stroke="#3fb44d" stroke-width="2.4"/><path d="M6 0l6 2.5-5 3z" fill="#3fb44d"/><rect x="8" y="7" width="6.5" height="7" fill="#aaaaaa"/></svg>
<div class="a" style="left:86px;top:472px;width:1px;height:1px;background:repeating-linear-gradient(180deg,#6a6d6f 0 1px,transparent 1px 3px)"></div>
<div class="a" style="left:86px;top:472px;width:22px;height:1px;background:repeating-linear-gradient(90deg,#6a6d6f 0 1px,transparent 1px 3px)"></div>
<svg class="a" style="left:247px;top:447px;" width="15" height="15" viewBox="0 0 15 15"><path d="M0 0l6 5-6 5z" fill="#e0574a"/><path d="M6 3h8M6 6h8" stroke="#9a9a9a" stroke-width="1.6"/><path d="M3 10h11M3 13h11" stroke="#4a9ad6" stroke-width="1.6"/></svg>
<div class="a" style="left:270px;top:446px;width:1px;height:20px;background:repeating-linear-gradient(180deg,#6a6d6f 0 1px,transparent 1px 3px)"></div>
<svg class="a" style="left:278px;top:447px;" width="15" height="15" viewBox="0 0 15 15"><path d="M0 1h15M0 14h15" stroke="#9a9a9a" stroke-width="1.6"/><path d="M5.5 3h4v4h3l-5 5-5-5h3z" fill="#4a9ad6"/></svg>
<svg class="a" style="left:303px;top:447px;" width="15" height="15" viewBox="0 0 15 15"><path d="M0 14h15" stroke="#9a9a9a" stroke-width="1.6"/><path d="M1 3l3-3 6 6 2-2v8H4l2-2z" fill="#4a9ad6"/></svg>
<svg class="a" style="left:327px;top:447px;" width="15" height="15" viewBox="0 0 15 15"><path d="M0 14h15" stroke="#9a9a9a" stroke-width="1.6"/><path d="M0 3c4-2 7-1 9 2l2-2v8H3l2-2C4 6 2 5 0 6z" fill="#e0574a"/></svg>
<svg class="a" style="left:352px;top:447px;" width="15" height="15" viewBox="0 0 15 15"><path d="M0 14h15" stroke="#9a9a9a" stroke-width="1.6"/><path d="M3 11l-3-3 5-5-2-2h9v9l-2-2z" fill="#4a9ad6"/></svg>
<svg class="a" style="left:377px;top:446px;" width="16" height="16" viewBox="0 0 16 16"><path d="M1 1l6 6M7 1L1 7" stroke="#e0574a" stroke-width="1.8"/><rect x="5.5" y="6.5" width="10" height="9" fill="#2c5673" stroke="#9a9a9a" stroke-width="1"/><path d="M9 9l3 2-3 2" fill="none" stroke="#ddd" stroke-width="1"/></svg>
<svg class="a" style="left:402px;top:446px;" width="16" height="16" viewBox="0 0 16 16"><path d="M1 1l5 5 2-2v6H2l2-2-5-5z" fill="#4a9ad6"/><path d="M10 7h5M12.5 7v8M10 15h5" stroke="#c8c8c8" stroke-width="1.2"/></svg>
<div class="a" style="left:426px;top:446px;width:1px;height:20px;background:repeating-linear-gradient(180deg,#6a6d6f 0 1px,transparent 1px 3px)"></div>
<svg class="a" style="left:434px;top:448px;" width="14" height="13" viewBox="0 0 14 13"><rect x="0" y="0" width="14" height="13" fill="#8a8a8a"/><rect x="1.5" y="1.5" width="11" height="3" fill="#4a9ad6"/><path d="M2 7h3M6 7h3M10 7h2M2 10h3M6 10h3" stroke="#ddd" stroke-width="1.2"/><path d="M10 7h2.5" stroke="#e0574a" stroke-width="1.2"/><path d="M10 10h2.5" stroke="#3fb44d" stroke-width="1.2"/></svg>
<svg class="a" style="left:1467px;top:447px;" width="16" height="15" viewBox="0 0 16 15"><rect x="0" y="3" width="8" height="11" fill="#5ab4e6"/><path d="M0 3h8M0 14h8" stroke="#ddd" stroke-width="1.5"/><path d="M1 6h6M1 9h6M1 12h6" stroke="#2a7ab0" stroke-width="1"/><rect x="6.5" y="1" width="8" height="11" fill="#f0a732"/><path d="M6.5 1h8M6.5 12h8" stroke="#ddd" stroke-width="1.5"/><path d="M7.5 4h6M7.5 7h6M7.5 10h6" stroke="#b06a10" stroke-width="1"/></svg>
<svg class="a" style="left:90px;top:481px;" width="15" height="14" viewBox="0 0 15 14"><path d="M1 1h3M1 3h3M1 5h3M1 7h3M1 9h3M1 11h3M1 13h3" stroke="#8c8c8c" stroke-width="1"/><path d="M4 0l10 7-10 7z" fill="#3fb44d"/></svg>
<svg class="a" style="left:91px;top:506px;" width="11" height="12" viewBox="0 0 11 12"><rect x="0" y="0" width="3.6" height="12" fill="#7a7c7e"/><rect x="7" y="0" width="3.6" height="12" fill="#7a7c7e"/></svg>
<div class="a" style="left:90px;top:531px;width:12px;height:12px;background:#e25a50;"></div>
<div class="a" style="left:86px;top:553px;width:22px;height:1px;background:repeating-linear-gradient(90deg,#6a6d6f 0 1px,transparent 1px 3px)"></div>
<svg class="a" style="left:89px;top:561px;" width="15" height="14" viewBox="0 0 15 14"><circle cx="5" cy="4.5" r="4" fill="#e25a50"/><circle cx="5" cy="9" r="4.5" fill="#e05a4e"/><rect x="11" y="3" width="3" height="3" fill="#c8c8c8"/><rect x="11" y="8" width="3" height="3" fill="#c8c8c8"/></svg>
<svg class="a" style="left:89px;top:586px;" width="14" height="14" viewBox="0 0 14 14"><circle cx="7" cy="7" r="6" fill="#e25a50" stroke="#bbbbbb" stroke-width="1.2"/><path d="M3 11l8-8" stroke="#cfcfcf" stroke-width="1.5"/></svg>
<div class="a" style="left:86px;top:610px;width:22px;height:1px;background:repeating-linear-gradient(90deg,#6a6d6f 0 1px,transparent 1px 3px)"></div>
<svg class="a" style="left:89px;top:617px;" width="14" height="13" viewBox="0 0 14 13"><rect x="0" y="2" width="14" height="11" fill="#8a8a8a"/><rect x="2" y="0" width="5" height="3" fill="#8a8a8a"/><circle cx="7" cy="7.5" r="4" fill="#4a9ad6" stroke="#2b2b2b" stroke-width="1"/></svg>
<div class="a" style="left:86px;top:640px;width:22px;height:1px;background:repeating-linear-gradient(90deg,#6a6d6f 0 1px,transparent 1px 3px)"></div>
<svg class="a" style="left:89px;top:648px;" width="14" height="14" viewBox="0 0 14 14"><rect x="0.5" y="0.5" width="8" height="6" fill="none" stroke="#4a9ad6" stroke-width="1.2"/><rect x="2.5" y="2.5" width="4" height="2" fill="#4a9ad6"/><rect x="10.5" y="0.5" width="3" height="6" fill="none" stroke="#9a9a9a"/><rect x="0.5" y="9" width="13" height="4.5" fill="none" stroke="#9a9a9a" stroke-width="1.2"/></svg>
<svg class="a" style="left:89px;top:673px;" width="16" height="15" viewBox="0 0 16 15"><circle cx="6.5" cy="6.5" r="3.8" fill="none" stroke="#4a9ad6" stroke-width="3"/><path d="M6.5 0v13M0 6.5h13M2 2l9 9M11 2l-9 9" stroke="#4a9ad6" stroke-width="2"/><circle cx="6.5" cy="6.5" r="1.8" fill="#3c3f41"/><path d="M10 12h5l-2.5 3z" fill="#dddddd"/></svg>
<div class="a" style="left:86px;top:696px;width:22px;height:1px;background:repeating-linear-gradient(90deg,#6a6d6f 0 1px,transparent 1px 3px)"></div>
<svg class="a" style="left:89px;top:704px;" width="15" height="15" viewBox="0 0 15 15"><path d="M0 15l5-5" stroke="#9a9a9a" stroke-width="1.5"/><ellipse cx="9" cy="6" rx="5.5" ry="4" transform="rotate(-40 9 6)" fill="#a27fcf"/><circle cx="8" cy="7" r="2" fill="#5a4a6a"/></svg>
<svg class="a" style="left:90px;top:730px;" width="13" height="13" viewBox="0 0 13 13"><path d="M1 1l11 11M12 1L1 12" stroke="#e0574a" stroke-width="2.6"/></svg>
<div class="t" style="left:90px;top:752.61px;font-size:17px;line-height:17px;color:#3e9fd8;font-weight:bold;font-family:'Liberation Sans',sans-serif;">?</div>
<div class="a" style="left:112px;top:473px;width:358px;height:28px;background:#434e5f;"></div>
<div class="a" style="left:112px;top:500px;width:358px;height:1px;background:#2b2b2b;"></div>
<svg class="a" style="left:116px;top:479px;" width="15" height="15" viewBox="0 0 15 15"><rect x="0.5" y="0.5" width="11" height="10" fill="none" stroke="#8a8a8a"/><rect x="1.5" y="2" width="11" height="10" fill="#434e5f" stroke="#8a8a8a"/><rect x="3" y="4" width="11" height="10" fill="#2f5873" stroke="#9a9a9a"/><path d="M6 7l-2 1.5 2 1.5M10 9l2 1.5-2 1.5" fill="none" stroke="#e0e0e0" stroke-width="1"/></svg>
<div class="t" style="left:135.8px;top:482.37px;font-size:11px;line-height:11px;color:#c8c8c8;letter-spacing:-0.5px;">Frames</div>
<svg class="a" style="left:456px;top:483px;" width="12" height="8" viewBox="0 0 12 8"><path d="M0 4h7M5 2l2 2-2 2" fill="none" stroke="#6f7275" stroke-width="1"/><rect x="9" y="0" width="3" height="3" fill="#6f7275"/></svg>
<div class="a" style="left:470px;top:473px;width:1px;height:389px;background:#2b2b2b;"></div>
<div class="a" style="left:519px;top:473px;width:1px;height:389px;background:#2b2b2b;"></div>
<div class="a" style="left:112px;top:501px;width:358px;height:29px;background:#3c3f41;"></div>
<div class="a" style="left:113px;top:503px;width:276px;height:26px;border:1px solid #5b5e60;border-radius:3px"></div>
<div class="a" style="left:368px;top:504px;width:1px;height:24px;background:#5b5e60;"></div>
<svg class="a" style="left:119px;top:507px;" width="16" height="16" viewBox="0 0 16 16"><rect x="0" y="1" width="7" height="13" fill="none" stroke="#c8a35a" stroke-width="1"/><path d="M1 3h5M1 12h5" stroke="#d8b060"/><circle cx="9.5" cy="8" r="6" fill="#e25a50" stroke="#e9e9e9" stroke-width=".8"/><path d="M6.5 7.5l2.5 2.5 4-4.5" fill="none" stroke="#fff" stroke-width="1.6"/></svg>
<div class="t" style="left:139px;top:510.71px;font-size:12px;line-height:12px;color:#c8c8c8;letter-spacing:-0.20000000000000018px;">&quot;http-bio-8080-exec-1&quot;@7,348 ...</div>
<svg class="a" style="left:373px;top:513px;" width="10" height="6" viewBox="0 0 10 6"><path d="M0 0h9.5L4.75 6z" fill="#bcbcbc"/></svg>
<div class="a" style="left:392px;top:505px;width:1px;height:22px;background:repeating-linear-gradient(180deg,#6a6d6f 0 1px,transparent 1px 3px)"></div>
<svg class="a" style="left:400px;top:509px;" width="14" height="13" viewBox="0 0 14 13"><path d="M7 0l7 7h-4v6H4V7H0z" fill="#6f7173"/></svg>
<svg class="a" style="left:425px;top:509px;" width="14" height="13" viewBox="0 0 14 13"><path d="M7 13l7-7h-4V0H4v6H0z" fill="#3d9fd9"/></svg>
<svg class="a" style="left:449px;top:508px;" width="16" height="14" viewBox="0 0 16 14"><path d="M0 0h16l-6 6v8l-4-3V6z" fill="#3d9fd9"/></svg>
<div class="a" style="left:112px;top:530px;width:358px;height:332px;overflow:hidden;background:#3c3f41">
<div class="a" style="left:0;top:0px;width:358px;height:21px;background:#4b6eaf"></div>
<div class="t" style="left:16.4px;top:6.76px;font-size:11.67px;line-height:11.67px;color:#d8d8d8;letter-spacing:-0.0px">showUser:37, SysUserController <i style="color:#c8d4ea">(com.youmeek.ssm.module.user.controller)</i></div>
<div class="a" style="left:0;top:21px;width:358px;height:21px;background:#3c3f41"></div>
<div class="t" style="left:16.4px;top:27.76px;font-size:11.67px;line-height:11.67px;color:#e6e6e6;letter-spacing:-0.0px">invoke:-1, SysUserController$$FastClassBySpringCGLIB$$<i style="color:#9a9a9a"></i></div>
<div class="a" style="left:0;top:42px;width:358px;height:21px;background:#4f4838"></div>
<div class="t" style="left:16.4px;top:48.76px;font-size:11.67px;line-height:11.67px;color:#b4b4b4;letter-spacing:-0.0px">invoke:204, MethodProxy <i style="color:#8e8a7e">(org.springframework.cglib.proxy)</i></div>
<div class="a" style="left:0;top:63px;width:358px;height:21px;background:#4f4838"></div>
<div class="t" style="left:16.4px;top:69.76px;font-size:11.67px;line-height:11.67px;color:#b4b4b4;letter-spacing:-0.0px">invokeJoinpoint:720, CglibAopProxy$CglibMethodInvocation <i style="color:#8e8a7e"></i></div>
<div class="a" style="left:0;top:84px;width:358px;height:21px;background:#4f4838"></div>
<div class="t" style="left:16.4px;top:90.76px;font-size:11.67px;line-height:11.67px;color:#b4b4b4;letter-spacing:-0.0px">proceed:157, ReflectiveMethodInvocation <i style="color:#8e8a7e">(org.springframework.aop)</i></div>
<div class="a" style="left:0;top:105px;width:358px;height:21px;background:#4f4838"></div>
<div class="t" style="left:16.4px;top:111.76px;font-size:11.67px;line-height:11.67px;color:#b4b4b4;letter-spacing:-0.0px">invoke:52, MethodBeforeAdviceInterceptor <i style="color:#8e8a7e">(org.springframework)</i></div>
<div class="a" style="left:0;top:126px;width:358px;height:21px;background:#4f4838"></div>
<div class="t" style="left:16.4px;top:132.76px;font-size:11.67px;line-height:11.67px;color:#b4b4b4;letter-spacing:-0.0px">proceed:179, ReflectiveMethodInvocation <i style="color:#8e8a7e">(org.springframework.aop)</i></div>
<div class="a" style="left:0;top:147px;width:358px;height:21px;background:#4f4838"></div>
<div class="t" style="left:16.4px;top:153.76px;font-size:11.67px;line-height:11.67px;color:#b4b4b4;letter-spacing:-0.0px">invoke:44, AspectJAfterAdvice <i style="color:#8e8a7e">(org.springframework.aop)</i></div>
<div class="a" style="left:0;top:168px;width:358px;height:21px;background:#4f4838"></div>
<div class="t" style="left:16.4px;top:174.76px;font-size:11.67px;line-height:11.67px;color:#b4b4b4;letter-spacing:-0.0px">proceed:179, ReflectiveMethodInvocation <i style="color:#8e8a7e">(org.springframework.aop)</i></div>
<div class="a" style="left:0;top:189px;width:358px;height:21px;background:#4f4838"></div>
<div class="t" style="left:16.4px;top:195.76px;font-size:11.67px;line-height:11.67px;color:#b4b4b4;letter-spacing:-0.0px">invoke:92, ExposeInvocationInterceptor <i style="color:#8e8a7e">(org.springframework)</i></div>
<div class="a" style="left:0;top:210px;width:358px;height:21px;background:#4f4838"></div>
<div class="t" style="left:16.4px;top:216.76px;font-size:11.67px;line-height:11.67px;color:#b4b4b4;letter-spacing:-0.0px">proceed:179, ReflectiveMethodInvocation <i style="color:#8e8a7e">(org.springframework.aop)</i></div>
<div class="a" style="left:0;top:231px;width:358px;height:21px;background:#4f4838"></div>
<div class="t" style="left:16.4px;top:237.76px;font-size:11.67px;line-height:11.67px;color:#b4b4b4;letter-spacing:-0.0px">intercept:655, CglibAopProxy$DynamicAdvisedInterceptor <i style="color:#8e8a7e"></i></div>
<div class="a" style="left:0;top:252px;width:358px;height:21px;background:#3c3f41"></div>
<div class="t" style="left:16.4px;top:258.76px;font-size:11.67px;line-height:11.67px;color:#e6e6e6;letter-spacing:-0.0px">showUser:-1, SysUserController$$EnhancerBySpringCGLIB$$<i style="color:#9a9a9a"></i></div>
<div class="a" style="left:0;top:273px;width:358px;height:21px;background:#4f4838"></div>
<div class="t" style="left:16.4px;top:279.76px;font-size:11.67px;line-height:11.67px;color:#b4b4b4;letter-spacing:-0.0px">invoke0:-1, NativeMethodAccessorImpl <i style="color:#8e8a7e">(sun.reflect)</i></div>
<div class="a" style="left:0;top:294px;width:358px;height:21px;background:#4f4838"></div>
<div class="t" style="left:16.4px;top:300.76px;font-size:11.67px;line-height:11.67px;color:#b4b4b4;letter-spacing:-0.0px">invoke:57, NativeMethodAccessorImpl <i style="color:#8e8a7e">(sun.reflect)</i></div>
<div class="a" style="left:0;top:315px;width:358px;height:21px;background:#4f4838"></div>
<div class="t" style="left:16.4px;top:321.76px;font-size:11.67px;line-height:11.67px;color:#b4b4b4;letter-spacing:-0.0px">invoke:43, DelegatingMethodAccessorImpl <i style="color:#8e8a7e">(sun.reflect)</i></div>
</div>
<div class="a" style="left:460px;top:530px;width:10px;height:89px;background:rgba(120,120,120,.22);"></div>
<div class="a" style="left:471px;top:473px;width:48px;height:28px;background:#434e5f;"></div>
<div class="a" style="left:471px;top:500px;width:48px;height:1px;background:#2b2b2b;"></div>
<svg class="a" style="left:477px;top:480px;" width="13" height="12" viewBox="0 0 13 12"><rect x="0" y="0" width="13" height="3" fill="#d8a35a"/><rect x="0" y="4.5" width="13" height="3" fill="#d8a35a"/><rect x="0" y="9" width="13" height="3" fill="#d8a35a"/></svg>
<div class="t" style="left:492.5px;top:482.34px;font-size:10px;line-height:10px;color:#c8c8c8;letter-spacing:-1.0px;">Vari</div>
<div class="a" style="left:471px;top:501px;width:48px;height:361px;background:#3c3f41;"></div>
<svg class="a" style="left:475px;top:508px;" width="8" height="9" viewBox="0 0 8 9"><path d="M0 0l8 4.5L0 9z" fill="#9a9a9a"/></svg>
<svg class="a" style="left:495px;top:506px;" width="12" height="12" viewBox="0 0 12 12"><rect x="0" y="0" width="12" height="3" fill="#d8a35a"/><rect x="0" y="4.5" width="12" height="3" fill="#d8a35a"/><rect x="0" y="9" width="12" height="3" fill="#d8a35a"/></svg>
<div class="a" style="left:471px;top:500px;width:48px;height:30px;overflow:hidden">
<div class="t" style="left:41px;top:8.81px;font-size:12px;line-height:12px;color:#e0574a;font-weight:bold;">t</div>
</div>
<svg class="a" style="left:475px;top:529px;" width="8" height="9" viewBox="0 0 8 9"><path d="M0 0l8 4.5L0 9z" fill="#9a9a9a"/></svg>
<svg class="a" style="left:475px;top:550px;" width="8" height="9" viewBox="0 0 8 9"><path d="M0 0l8 4.5L0 9z" fill="#9a9a9a"/></svg>
<div class="t" style="left:490.4px;top:529.86px;font-size:11.67px;line-height:11.67px;color:#808080;letter-spacing:-0.2px;">/iew</div>
<div class="t" style="left:490.4px;top:550.56px;font-size:11.67px;line-height:11.67px;color:#808080;letter-spacing:-0.2px;">/iew</div>
<div class="a" style="left:112px;top:852px;width:387px;height:10px;background:rgba(140,140,140,.30);"></div>
<div class="a" style="left:520px;top:473px;width:968px;height:28px;background:#434e5f;"></div>
<div class="a" style="left:520px;top:500px;width:968px;height:1px;background:#2b2b2b;"></div>
<svg class="a" style="left:524px;top:478px;" width="16" height="16" viewBox="0 0 16 16"><rect x="2" y="0" width="14" height="13" fill="#4a7ea8"/><rect x="3" y="3" width="12" height="9" fill="#5b6a7a"/><circle cx="4" cy="12" r="3.5" fill="#3fb44d"/><circle cx="10" cy="12.5" r="3.5" fill="#3fb44d"/><path d="M5 8c0-4 2-5 4-5M11 8c0-4 2-5 4-5" stroke="#ddd" fill="none" stroke-width=".9"/></svg>
<div class="t" style="left:542.8px;top:482.57px;font-size:11px;line-height:11px;color:#c8c8c8;letter-spacing:-0.5px;">Watches</div>
<svg class="a" style="left:1472px;top:483px;" width="12" height="8" viewBox="0 0 12 8"><path d="M0 4h7M5 2l2 2-2 2" fill="none" stroke="#6f7275" stroke-width="1"/><rect x="9" y="0" width="3" height="3" fill="#6f7275"/></svg>
<div class="a" style="left:520px;top:501px;width:968px;height:361px;background:#3c3f41;"></div>
<svg class="a" style="left:526px;top:508px;" width="13" height="12" viewBox="0 0 13 12"><path d="M6.5 0v12M0 6h13" stroke="#3fb44d" stroke-width="2"/></svg>
<div class="a" style="left:551px;top:513px;width:12px;height:2px;background:#e0574a;"></div>
<svg class="a" style="left:576px;top:508px;" width="12" height="12" viewBox="0 0 12 12"><path d="M6 0l6 6H8.5v6h-5V6H0z" fill="#6f7173"/></svg>
<svg class="a" style="left:601px;top:508px;" width="12" height="12" viewBox="0 0 12 12"><path d="M6 12l6-6H8.5V0h-5v6H0z" fill="#6f7173"/></svg>
<svg class="a" style="left:625px;top:506px;" width="14" height="16" viewBox="0 0 14 16"><path d="M4 0.5h6l3 3v10H9" fill="none" stroke="#6f7173" stroke-width="1.4"/><path d="M0.8 4h5l3 3v8.5h-8z" fill="none" stroke="#6f7173" stroke-width="1.4"/></svg>
<div class="a" style="left:520px;top:528px;width:968px;height:21px;background:#0d293e;"></div>
<svg class="a" style="left:524px;top:536px;" width="9" height="8" viewBox="0 0 9 8"><path d="M0 0h9L4.5 8z" fill="#9a9a9a"/></svg>
<svg class="a" style="left:542px;top:531px;" width="16" height="13" viewBox="0 0 16 13"><circle cx="4" cy="9" r="3.3" fill="#3fb44d"/><circle cx="11" cy="9" r="3.3" fill="#3fb44d"/><path d="M2 8l4-7M9 8l5-7" stroke="#c8c8c8" stroke-width="1" fill="none"/></svg>
<div class="t" style="left:561.8px;top:534.96px;font-size:11.67px;line-height:11.67px;letter-spacing:-0.17px"><span style="color:#f26b6b;font-weight:bold">userId</span><span style="color:#c8c8c8"> = </span><span style="color:#9c9c9c">{java.lang.Long@7557}</span><span style="color:#d0d0d0"> "1"</span></div>
<svg class="a" style="left:561px;top:550px;" width="17" height="17" viewBox="0 0 17 17"><circle cx="9" cy="9" r="7" fill="#f2b141" stroke="#c88a2a" stroke-width=".6"/><text x="6.5" y="12.5" font-size="9" font-family="Liberation Mono" fill="#6b4a14">f</text><circle cx="4" cy="4" r="2.6" fill="#e8e8e8"/></svg>
<div class="t" style="left:581.5px;top:555.76px;font-size:11.67px;line-height:11.67px;letter-spacing:-0.17px"><span style="color:#f26b6b;font-weight:bold">value</span><span style="color:#c8c8c8"> = 1</span></div>
<div class="t" style="left:45.4px;top:192.9px;width:58.39999999999998px;height:10.2px;font-size:10.2px;line-height:10.2px;color:#bbbbbb;transform:rotate(-90deg);text-align:center;letter-spacing:-0.07px">1: Project</div>
<svg class="a" style="left:65px;top:231.5px;" width="14" height="14" viewBox="0 0 14 14"><path d="M1 3h5l1 1.5h5V12H1z" fill="none" stroke="#d8a35a" stroke-width="2"/><rect x="5" y="6" width="8" height="8" fill="#111"/><rect x="7" y="10" width="3" height="1.3" fill="#ddd"/></svg>
<div class="t" style="left:39.0px;top:299.1px;width:71.10000000000002px;height:10.2px;font-size:10.2px;line-height:10.2px;color:#bbbbbb;transform:rotate(-90deg);text-align:center;letter-spacing:-0.07px">7: Structure</div>
<svg class="a" style="left:64.5px;top:343px;" width="14" height="19" viewBox="0 0 14 19"><path d="M3.5 4L7 14M10.5 4L7 14" stroke="#999" stroke-width="1"/><circle cx="3.5" cy="4" r="3" fill="#4a9ad6"/><circle cx="10.5" cy="4" r="3" fill="#e0574a"/><circle cx="7" cy="15" r="3" fill="#d8a35a"/></svg>
<div class="t" style="left:65.8px;top:530.4px;width:17.59999999999991px;height:10.2px;font-size:10.2px;line-height:10.2px;color:#bbbbbb;transform:rotate(-90deg);text-align:center;letter-spacing:-0.07px">Web</div>
<svg class="a" style="left:65px;top:547px;" width="14" height="14" viewBox="0 0 14 14"><rect x="1" y="0" width="12" height="9" fill="none" stroke="#9a9a9a"/><circle cx="5" cy="8" r="4.5" fill="#4a9ad6"/><path d="M2 7c2 0 3 2 5 1" stroke="#e2a146" stroke-width="1.6" fill="none"/></svg>
<div class="t" style="left:38.6px;top:608.6px;width:72.0px;height:10.2px;font-size:10.2px;line-height:10.2px;color:#bbbbbb;transform:rotate(-90deg);text-align:center;letter-spacing:-0.07px">2: Favorites</div>
<svg class="a" style="left:64.5px;top:657px;" width="14" height="13" viewBox="0 0 14 13"><path d="M7 0l2 4.5 4.8.4-3.6 3.2 1.1 4.8L7 10.4 2.7 12.9l1.1-4.8L.2 4.9 5 4.5z" fill="#f0a732"/></svg>
<div class="t" style="left:44.3px;top:719.1px;width:60.5px;height:10.2px;font-size:10.2px;line-height:10.2px;color:#bbbbbb;transform:rotate(-90deg);text-align:center;letter-spacing:-0.07px">Persistence</div>
<svg class="a" style="left:65px;top:764px;" width="14" height="14" viewBox="0 0 14 14"><rect x="0" y="0" width="8" height="7" fill="#4a9ad6"/><ellipse cx="9" cy="6" rx="4.5" ry="2" fill="#f2b141"/><rect x="4.5" y="6" width="9" height="7" fill="#f2b141"/><ellipse cx="9" cy="13" rx="4.5" ry="1.5" fill="#d8901a"/><path d="M4.5 9h9M4.5 11h9" stroke="#b57618"/></svg>
<div class="t" style="left:60.2px;top:808.5px;width:28.799999999999955px;height:10.2px;font-size:10.2px;line-height:10.2px;color:#bbbbbb;transform:rotate(-90deg);text-align:center;letter-spacing:-0.07px">JRebel</div>
<svg class="a" style="left:63px;top:837.5px;" width="16" height="16" viewBox="0 0 16 16"><path d="M1 13c2-6 6-10 13-12-1 6-5 10-11 13z" fill="#6cb33f"/><path d="M1 13l3-1-2-2z" fill="#ddd"/><text x="8" y="16" font-size="6" font-family="Liberation Sans" font-weight="bold" fill="#ddd">JR</text></svg>
<svg class="a" style="left:1493px;top:172px;" width="16" height="12" viewBox="0 0 16 12"><text x="0" y="10.5" font-size="15" font-family="Liberation Sans" font-style="italic" font-weight="bold" fill="#5797c7">m</text></svg>
<div class="t" style="left:1456.7px;top:224.0px;width:84.59999999999997px;height:10.2px;font-size:10.2px;line-height:10.2px;color:#bbbbbb;transform:rotate(90deg);text-align:center;letter-spacing:-0.07px">Maven Projects</div>
<svg class="a" style="left:1493px;top:294px;" width="15" height="14" viewBox="0 0 15 14"><rect x="0.5" y="0.5" width="7" height="12" fill="none" stroke="#9a9a9a"/><rect x="4" y="4" width="10" height="10" fill="#3c3f41" stroke="#aaa"/><path d="M4 7h10M4 10h10M7.5 4v10M11 4v10" stroke="#aaa" stroke-width=".8"/></svg>
<div class="t" style="left:1474.8px;top:330.8px;width:48.30000000000001px;height:10.2px;font-size:10.2px;line-height:10.2px;color:#bbbbbb;transform:rotate(90deg);text-align:center;letter-spacing:-0.07px">Database</div>
<svg class="a" style="left:1493px;top:379px;" width="15" height="14" viewBox="0 0 15 14"><circle cx="4" cy="4" r="3" fill="#e2a146"/><circle cx="7" cy="7" r="2.5" fill="#d8901a"/><circle cx="10" cy="9" r="4.5" fill="#4a9ad6"/><path d="M7 12l6-6" stroke="#f2c14a" stroke-width="2"/></svg>
<div class="t" style="left:1490.2px;top:399.8px;width:17.69999999999999px;height:10.2px;font-size:10.2px;line-height:10.2px;color:#bbbbbb;transform:rotate(90deg);text-align:center;letter-spacing:-0.07px">CDI</div>
<svg class="a" style="left:1493px;top:431px;" width="15" height="14" viewBox="0 0 15 14"><path d="M3 0h6v4" fill="none" stroke="#9a9a9a"/><rect x="0" y="5" width="15" height="9" fill="#5fb35f"/><text x="1" y="13" font-size="8" font-family="Liberation Sans" font-weight="bold" fill="#1a3a1a">JSF</text></svg>
<div class="t" style="left:1490.3px;top:452.6px;width:17.399999999999977px;height:10.2px;font-size:10.2px;line-height:10.2px;color:#bbbbbb;transform:rotate(90deg);text-align:center;letter-spacing:-0.07px">JSF</div>
<svg class="a" style="left:1493px;top:489px;" width="16" height="14" viewBox="0 0 16 14"><path d="M0 5l6-5 6 5-6 5z" fill="#e2a146"/><path d="M1.5 5l4.5-3.5" stroke="#8a5a1a"/><path d="M6 9l3 3.5 6-7" fill="none" stroke="#3fc44d" stroke-width="2"/></svg>
<div class="t" style="left:1454.8px;top:546.1px;width:88.39999999999998px;height:10.2px;font-size:10.2px;line-height:10.2px;color:#bbbbbb;transform:rotate(90deg);text-align:center;letter-spacing:-0.07px">Bean Validation</div>
<svg class="a" style="left:1493px;top:620px;" width="15" height="15" viewBox="0 0 15 15"><ellipse cx="7.5" cy="3" rx="3" ry="2.5" fill="#a27fcf"/><ellipse cx="7.5" cy="8" rx="3" ry="2.5" fill="#a27fcf"/><ellipse cx="7.5" cy="12.5" rx="3.5" ry="2.5" fill="#a27fcf"/><path d="M1 5l4 2M14 5l-4 2M1 10l4-1M14 10l-4-1M2 15l3-2M13 15l-3-2" stroke="#a27fcf"/></svg>
<div class="t" style="left:1472.2px;top:659.1px;width:53.60000000000002px;height:10.2px;font-size:10.2px;line-height:10.2px;color:#bbbbbb;transform:rotate(90deg);text-align:center;letter-spacing:-0.07px">Ant Build</div>
<div class="a" style="left:59px;top:862px;width:1453px;height:23px;background:#3c3f41;"></div>
<div class="a" style="left:59px;top:862px;width:1453px;height:1px;background:#2b2b2b;"></div>
<div class="a" style="left:80px;top:863px;width:86px;height:21px;background:#2f3133;"></div>
<svg class="a" style="left:90px;top:867px;" width="16" height="15" viewBox="0 0 16 15"><ellipse cx="6" cy="7.5" rx="5" ry="5" fill="#4cb050"/><path d="M10 4a3.5 3.5 0 0 1 0 7z" fill="#aaa"/><path d="M2 0.5l2 2M10 0.5l-2 2M0 13l2-1.5M12 13l-2-1.5" stroke="#999" stroke-width="1"/><circle cx="12.5" cy="13" r="2.2" fill="#22c832"/></svg>
<div class="t" style="left:108.1px;top:871.26px;font-size:11.67px;line-height:11.67px;color:#f2f2f2;letter-spacing:-0.9000000000000004px;font-weight:bold;">5: Debug</div>
<div class="a" style="left:108.1px;top:881px;width:6px;height:1px;background:#f2f2f2;"></div>
<svg class="a" style="left:177px;top:867px;" width="14" height="15" viewBox="0 0 14 15"><circle cx="4" cy="3.5" r="3" fill="#ddd" stroke="#888" stroke-width=".8"/><path d="M2.5 3h3M2.5 4.5h3" stroke="#666" stroke-width=".7"/><circle cx="8.5" cy="8" r="4" fill="#f2b46a"/><path d="M4.5 6a4 4 0 0 1 8 0z" fill="#888"/><rect x="5" y="12" width="7" height="3" fill="#4a9ad6"/></svg>
<div class="t" style="left:194px;top:871.26px;font-size:11.67px;line-height:11.67px;color:#bbbbbb;letter-spacing:-0.9000000000000004px;">6: TODO</div>
<div class="a" style="left:194.0px;top:881px;width:6px;height:1px;background:#bbbbbb;"></div>
<svg class="a" style="left:258px;top:867px;" width="14" height="15" viewBox="0 0 14 15"><rect x="0.5" y="0.5" width="9" height="11" fill="none" stroke="#9fb4cc"/><rect x="4" y="4" width="9.5" height="10.5" fill="#e2c040"/><path d="M6 7h5M6 9.5h5M6 12h5M8.5 6v7" stroke="#6a5a1a" stroke-width=".9"/></svg>
<div class="t" style="left:275px;top:871.26px;font-size:11.67px;line-height:11.67px;color:#bbbbbb;letter-spacing:-0.9000000000000004px;">Java Enterprise</div>
<svg class="a" style="left:390px;top:867px;" width="16" height="15" viewBox="0 0 16 15"><rect x="0" y="0" width="9" height="9" fill="#4a9ad6"/><circle cx="9.5" cy="9" r="5.5" fill="#f2a23a"/><path d="M4 4l5 5-5 3z" fill="#3fb44d"/></svg>
<div class="t" style="left:407.4px;top:871.26px;font-size:11.67px;line-height:11.67px;color:#bbbbbb;letter-spacing:-0.9000000000000004px;">9: Version Control</div>
<div class="a" style="left:407.4px;top:881px;width:6px;height:1px;background:#bbbbbb;"></div>
<svg class="a" style="left:540px;top:868px;" width="13" height="13" viewBox="0 0 13 13"><rect x="0.5" y="0.5" width="12" height="12" fill="#111" stroke="#aaa"/><path d="M3 4l2.5 2L3 8M6 9h4" stroke="#eee" fill="none" stroke-width="1"/></svg>
<div class="t" style="left:557.5px;top:871.26px;font-size:11.67px;line-height:11.67px;color:#bbbbbb;letter-spacing:-0.9000000000000004px;">Terminal</div>
<svg class="a" style="left:626px;top:867px;" width="14" height="14" viewBox="0 0 14 14"><path d="M1 13C0 6 5 1 13 1c1 7-4 12-10 11z" fill="#6cb33f"/><path d="M2 12c2-4 5-6 8-8" stroke="#2d5a1a" stroke-width="1"/></svg>
<div class="t" style="left:643.2px;top:871.26px;font-size:11.67px;line-height:11.67px;color:#bbbbbb;letter-spacing:-0.9000000000000004px;">Spring</div>
<svg class="a" style="left:1205px;top:868px;" width="12" height="11" viewBox="0 0 12 11"><path d="M0 0h12v8H5l-3 3V8H0z" fill="#6f7173"/></svg>
<div class="t" style="left:1223px;top:871.26px;font-size:11.67px;line-height:11.67px;color:#bbbbbb;letter-spacing:-0.9000000000000004px;">Event Log</div>
<svg class="a" style="left:1304px;top:866px;" width="16" height="16" viewBox="0 0 16 16"><path d="M3 11c2-6 6-10 12-11-1 6-5 10-10 12z" fill="#6cb33f"/><path d="M0 16c1-4 4-6 8-6s6 3 7 6z" fill="#eeeeee"/><circle cx="10" cy="5" r="1" fill="#fff"/></svg>
<div class="t" style="left:1324px;top:871.26px;font-size:11.67px;line-height:11.67px;color:#bbbbbb;letter-spacing:-0.9000000000000004px;">JRebel remote servers log</div>
<div class="a" style="left:59px;top:884px;width:1453px;height:1px;background:#2b2b2b;"></div>
<div class="a" style="left:59px;top:885px;width:1453px;height:23px;background:#3c3f41;"></div>
<div class="a" style="left:70px;top:890px;width:13px;height:12px;background:#4e5254;border:1px solid #9a9a9a"></div>
<div class="a" style="left:70px;top:904px;width:13px;height:1px;background:#9a9a9a;"></div>
<div class="t" style="left:91.3px;top:892.86px;font-size:11.67px;line-height:11.67px;color:#bbbbbb;">Error running Unnamed: Unable to connect to the 192.168.92.128:51387 (20 minutes ago)</div>
<div class="t" style="left:1150.3px;top:892.86px;font-size:11.67px;line-height:11.67px;color:#bbbbbb;letter-spacing:-0.1299999999999999px;">39:6</div>
<div class="t" style="left:1188.8px;top:892.86px;font-size:11.67px;line-height:11.67px;color:#bbbbbb;letter-spacing:-0.1299999999999999px;">CRLF</div>
<svg class="a" style="left:1217px;top:893px;" width="6" height="10" viewBox="0 0 6 10"><path d="M0 4l3-4 3 4zM0 6l3 4 3-4z" fill="#bbbbbb"/></svg>
<div class="t" style="left:1233.7px;top:892.86px;font-size:11.67px;line-height:11.67px;color:#bbbbbb;letter-spacing:-0.1299999999999999px;">UTF-8</div>
<svg class="a" style="left:1269px;top:893px;" width="6" height="10" viewBox="0 0 6 10"><path d="M0 4l3-4 3 4zM0 6l3 4 3-4z" fill="#bbbbbb"/></svg>
<div class="t" style="left:1285.8px;top:892.86px;font-size:11.67px;line-height:11.67px;color:#bbbbbb;letter-spacing:-0.1299999999999999px;">Git: master</div>
<svg class="a" style="left:1362.5px;top:893px;" width="6" height="10" viewBox="0 0 6 10"><path d="M0 4l3-4 3 4zM0 6l3 4 3-4z" fill="#bbbbbb"/></svg>
<svg class="a" style="left:1379px;top:892px;" width="10" height="11" viewBox="0 0 10 11"><path d="M2 5V3a2.5 2.5 0 0 1 5 0" fill="none" stroke="#9a9a9a" stroke-width="1.3"/><rect x="2" y="5" width="8" height="6" fill="#9a9a9a"/><rect x="5" y="7" width="2" height="2" fill="#3c3f41"/></svg>
<svg class="a" style="left:1402px;top:889px;" width="14" height="17" viewBox="0 0 14 17"><path d="M2 5a5 5 0 0 1 10 0v5a5 5 0 0 1-10 0z" fill="none" stroke="#9a9a9a" stroke-width="1.4"/><path d="M1 6h12" stroke="#9a9a9a" stroke-width="1.4"/><circle cx="5" cy="9" r="1" fill="#9a9a9a"/><circle cx="9" cy="9" r="1" fill="#9a9a9a"/><path d="M4 15l3-2 3 2" fill="none" stroke="#9a9a9a"/></svg>
<div class="a" style="left:1423px;top:886px;width:85px;height:21px;background:#4a4c4e;"></div>
<div class="a" style="left:1423px;top:886px;width:29px;height:21px;background:#5c5e60;"></div>
<div class="t" style="left:1430px;top:892.46px;font-size:10.5px;line-height:10.5px;color:#9c9c9c;letter-spacing:-0.2999999999999998px;">354 of 1016M</div>
<svg class="a" style="left:370px;top:86px" width="184" height="68" viewBox="0 0 184 68"><rect x="4.7" y="4.7" width="174.1" height="57.6" rx="8.5" fill="none" stroke="#ff0c0c" stroke-width="3.4"/></svg>
<svg class="a" style="left:0;top:0" width="1571" height="967" viewBox="0 0 1571 967"><defs><filter id="sh" x="-20%" y="-20%" width="140%" height="140%"><feGaussianBlur in="SourceAlpha" stdDeviation="2.2"/><feOffset dx="1.5" dy="2.5"/><feComponentTransfer><feFuncA type="linear" slope="0.55"/></feComponentTransfer><feMerge><feMergeNode/><feMergeNode in="SourceGraphic"/></feMerge></filter></defs><g filter="url(#sh)"><path d="M141.5 397.4V330" stroke="#ff0000" stroke-width="5.3"/><path d="M132.7 342.4L141.5 324 150.9 342.4" fill="#ff0000" stroke="#ff0000" stroke-width="5" stroke-linecap="round" stroke-linejoin="round"/><path d="M141.5 321.3L134 338h15z" fill="#ff0000"/></g><g filter="url(#sh)"><path d="M1034.6 535.6L840 536.6" stroke="#ff0000" stroke-width="5.2"/><path d="M850.5 528L833.5 536.4 850.5 544.8" fill="#ff0000" stroke="#ff0000" stroke-width="5" stroke-linecap="round" stroke-linejoin="round"/></g></svg>
</body></html>
